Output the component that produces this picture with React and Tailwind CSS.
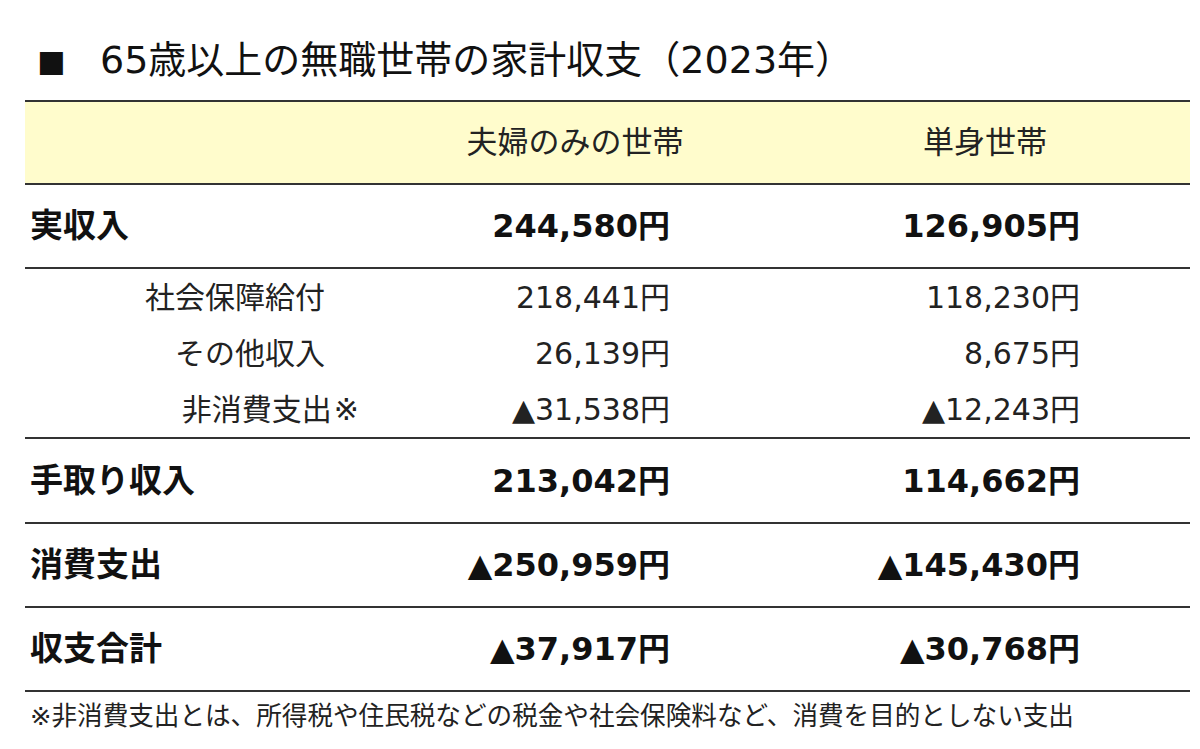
import React from "react";

const rows = [
  { label: "手取り収入", a: "213,042円", b: "114,662円", h: "h-[85px]" },
  { label: "消費支出", a: "▲250,959円", b: "▲145,430円", h: "h-[84px]" },
  { label: "収支合計", a: "▲37,917円", b: "▲30,768円", h: "h-[84px]" },
];

const subRows = [
  { label: "社会保障給付", a: "218,441円", b: "118,230円" },
  { label: "その他収入", a: "26,139円", b: "8,675円" },
  { label: "非消費支出", note: true, a: "▲31,538円", b: "▲12,243円" },
];

const grid = "grid grid-cols-[345px_410px_410px] items-center";

const App = () => {
  return (
    <div className="w-[1200px] h-[749px] bg-white text-[#111] pl-[25px] pr-[10px] pt-[34px] [font-family:'DejaVu_Sans','Noto_Sans_CJK_JP',sans-serif]">
      <h1 className="h-[52px] flex items-center pl-[12px] text-[38px] font-normal">
        <span className="text-[30px] w-[63px]">■</span>
        <span>65歳以上の無職世帯の家計収支（2023年）</span>
      </h1>

      <div className="mt-[14px] w-[1165px]">
        {/* header */}
        <div className={`${grid} h-[85px] border-y-2 border-[#333] bg-[#fffccc]`}>
          <div></div>
          <div className="text-center text-[31px] text-[#222]">夫婦のみの世帯</div>
          <div className="text-center text-[31px] text-[#222]">単身世帯</div>
        </div>

        <div className={`${grid} h-[84px] border-b-2 border-[#333] font-bold text-[32px]`}>
          <div className="pl-[5px] text-[33px]">実収入</div>
          <div className="text-right pr-[110px]">244,580円</div>
          <div className="text-right pr-[110px]">126,905円</div>
        </div>

        <div className="h-[170px] border-b-2 border-[#333]">
          {subRows.map((r) => (
            <div key={r.label} className={`${grid} h-[56px] text-[30px] text-[#222]`}>
              <div className="text-right pr-[45px]">
                {r.label}
                {r.note && <span className="-mr-[34px] ml-[2px]">※</span>}
              </div>
              <div className="text-right pr-[110px]">{r.a}</div>
              <div className="text-right pr-[110px]">{r.b}</div>
            </div>
          ))}
        </div>

        {rows.map((r) => (
          <div key={r.label} className={`${grid} ${r.h} border-b-2 border-[#333] font-bold text-[32px]`}>
            <div className="pl-[5px] text-[33px]">{r.label}</div>
            <div className="text-right pr-[110px]">{r.a}</div>
            <div className="text-right pr-[110px]">{r.b}</div>
          </div>
        ))}

        <div className="h-[48px] flex items-center pl-[5px] text-[25.6px] text-[#222] whitespace-nowrap">
          ※非消費支出とは、所得税や住民税などの税金や社会保険料など、消費を目的としない支出
        </div>
      </div>
    </div>
  );
};

export default App;
